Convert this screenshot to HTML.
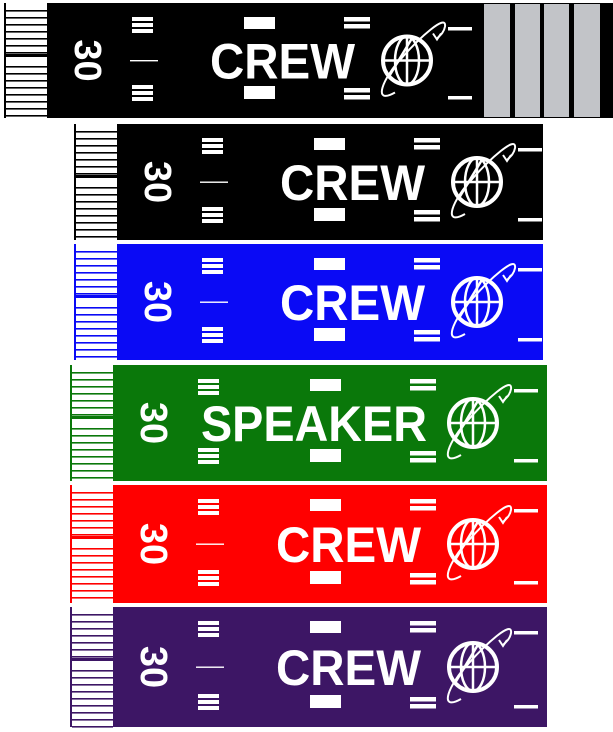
<!DOCTYPE html>
<html><head><meta charset="utf-8"><style>
html,body{margin:0;padding:0;background:#fff;width:613px;height:732px;overflow:hidden}
svg{display:block}
text{font-family:"Liberation Sans",Arial,sans-serif;font-weight:bold;fill:#fff}
</style></head><body>
<svg id="s" width="613" height="732" viewBox="0 0 613 732" xmlns="http://www.w3.org/2000/svg">
<rect x="472" y="3" width="141" height="115" fill="#000"/>
<rect x="484" y="4" width="26" height="113" fill="#c2c4c8"/>
<rect x="515" y="4" width="25" height="113" fill="#c2c4c8"/>
<rect x="544" y="4" width="25" height="113" fill="#c2c4c8"/>
<rect x="574" y="4" width="26" height="113" fill="#c2c4c8"/>
</svg>
<script>
var bands=[
 [2,3,470,115,"#000","CREW",1],
 [72,124,471,116,"#000","CREW",1],
 [72,244,471,116,"#0a0af5","CREW",1],
 [68,365,479,116,"#0a780a","SPEAKER",0],
 [68,485,479,118,"#ff0000","CREW",1],
 [68,607,479,120,"#3d1665","CREW",1]
];
var out="";
bands.forEach(function(b){
 var x=b[0],y=b[1],w=b[2],h=b[3],c=b[4],t=b[5],line=b[6];
 var g='<g transform="translate('+x+','+y+')">';
 g+='<rect x="0" y="0" width="'+w+'" height="'+h+'" fill="'+c+'"/>';
 g+='<rect x="0" y="0" width="45" height="'+h+'" fill="#fff"/>';
 g+='<rect x="2" y="0" width="2" height="'+h+'" fill="'+c+'"/>';
 for(var yy=2;yy<h-4;yy+=7){
  if(yy>46&&yy<58) continue;
  g+='<rect x="4" y="'+(yy+5)+'" width="41" height="1.6" fill="'+c+'"/>';
 }
 g+='<rect x="4" y="51" width="41" height="3" fill="'+c+'"/>';
 g+='<text transform="translate(73,'+(h/2)+') rotate(90)" x="0" y="0" text-anchor="middle" font-size="38">30</text>';
 [14,h-33].forEach(function(p){for(var i=0;i<3;i++)g+='<rect x="130" y="'+(p+i*6)+'" width="21" height="4" fill="#fff"/>';});
 if(line) g+='<rect x="128" y="'+(h/2-0.5)+'" width="28" height="1.4" fill="#fff"/>';
 g+='<rect x="242" y="14" width="31" height="12" fill="#fff"/>';
 g+='<rect x="242" y="'+(h-32)+'" width="31" height="13" fill="#fff"/>';
 [14,h-30].forEach(function(p){for(var i=0;i<2;i++)g+='<rect x="342" y="'+(p+i*7)+'" width="26" height="4.5" fill="#fff"/>';});
 g+='<rect x="446" y="24" width="24" height="3.5" fill="#fff"/>';
 g+='<rect x="446" y="'+(h-22)+'" width="24" height="3.5" fill="#fff"/>';
 if(t=="CREW") g+='<text x="208" y="'+(h/2+18)+'" font-size="50" textLength="145" lengthAdjust="spacingAndGlyphs">CREW</text>';
 else g+='<text x="133" y="'+(h/2+18)+'" font-size="50" textLength="226" lengthAdjust="spacingAndGlyphs">SPEAKER</text>';
 var cx=405,cy=h/2;
 g+='<g fill="none" stroke="#fff" stroke-width="4"><circle cx="'+cx+'" cy="'+cy+'" r="24"/></g>';
 g+='<g fill="none" stroke="#fff" stroke-width="2.5"><line x1="'+cx+'" y1="'+(cy-24)+'" x2="'+cx+'" y2="'+(cy+24)+'"/><line x1="'+(cx-24)+'" y1="'+cy+'" x2="'+(cx+24)+'" y2="'+cy+'"/>';
 g+='<ellipse cx="'+cx+'" cy="'+cy+'" rx="12" ry="24"/>';
 g+='<line x1="'+(cx-18)+'" y1="'+(cy+16)+'" x2="'+(cx+6)+'" y2="'+(cy-24)+'"/></g>';
 g+='<g fill="none" stroke="#fff" stroke-width="2"><path d="M'+(cx-12)+' '+(cy+32)+' C'+(cx-35)+' '+(cy+45)+' '+(cx-25)+' '+(cy+18)+' '+(cx-4)+' '+(cy-4)+' C'+(cx+12)+' '+(cy-22)+' '+(cx+40)+' '+(cy-48)+' '+(cx+38)+' '+(cy-34)+' C'+(cx+37)+' '+(cy-28)+' '+(cx+33)+' '+(cy-25)+' '+(cx+30)+' '+(cy-22)+'"/>';
 g+='<path d="M'+(cx+26)+' '+(cy-27)+' L'+(cx+30)+' '+(cy-21)+' L'+(cx+34)+' '+(cy-27)+'"/></g>';
 g+='</g>';
 out+=g;
});
document.getElementById("s").insertAdjacentHTML("beforeend",out);
</script>
</body></html>
